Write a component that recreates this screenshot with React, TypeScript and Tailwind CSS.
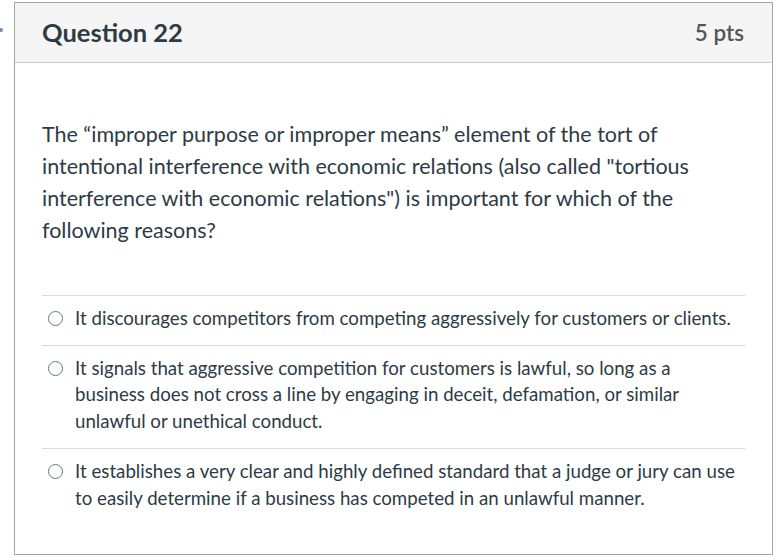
import React from "react";

const answers = [
  "It discourages competitors from competing aggressively for customers or clients.",
  "It signals that aggressive competition for customers is lawful, so long as a business does not cross a line by engaging in deceit, defamation, or similar unlawful or unethical conduct.",
  "It establishes a very clear and highly defined standard that a judge or jury can use to easily determine if a business has competed in an unlawful manner.",
];

export default function App() {
  return (
    <div className="w-[782px] h-[560px] bg-white relative font-['Lato','Noto_Sans',sans-serif] text-[#2d3b45] overflow-hidden">
      {/* sliver of the previous nav item */}
      <div className="absolute left-0 top-[28px] w-[3px] h-[4px] rounded-r bg-[#6b8fb5]" />
      <div className="ml-[14px] mt-[2px] w-[759px] h-[553px] border border-[#a5a5a5] flex flex-col">
        <div className="h-[60px] shrink-0 bg-[#f5f5f5] border-b border-[#c7cdd1] flex items-center justify-between pl-[27px] pr-[28px]">
          <h2 className="text-[25.5px] font-bold text-[#2d3b45]">Question 22</h2>
          <span className="text-[22.5px] font-semibold text-[#555555]">5 pts</span>
        </div>
        <div className="px-[27px] pt-[55px]">
          <p className="text-[21.5px] leading-[32px] pr-[25px]">
            The “improper purpose or improper means” element of the tort of intentional interference with economic relations (also called "tortious interference with economic relations") is important for which of the following reasons?
          </p>
          <div className="mt-[49px]">
            {answers.map((a, i) => (
              <div key={i} className="border-t border-[#dadada] flex items-start pt-[9px] pb-[13px]">
                <span className="mt-[6px] ml-[6px] w-[15px] h-[15px] rounded-full border border-[#6b7780] shrink-0" />
                <span className="ml-[12px] text-[18.7px] leading-[26.7px]">{a}</span>
              </div>
            ))}
          </div>
        </div>
      </div>
    </div>
  );
}
